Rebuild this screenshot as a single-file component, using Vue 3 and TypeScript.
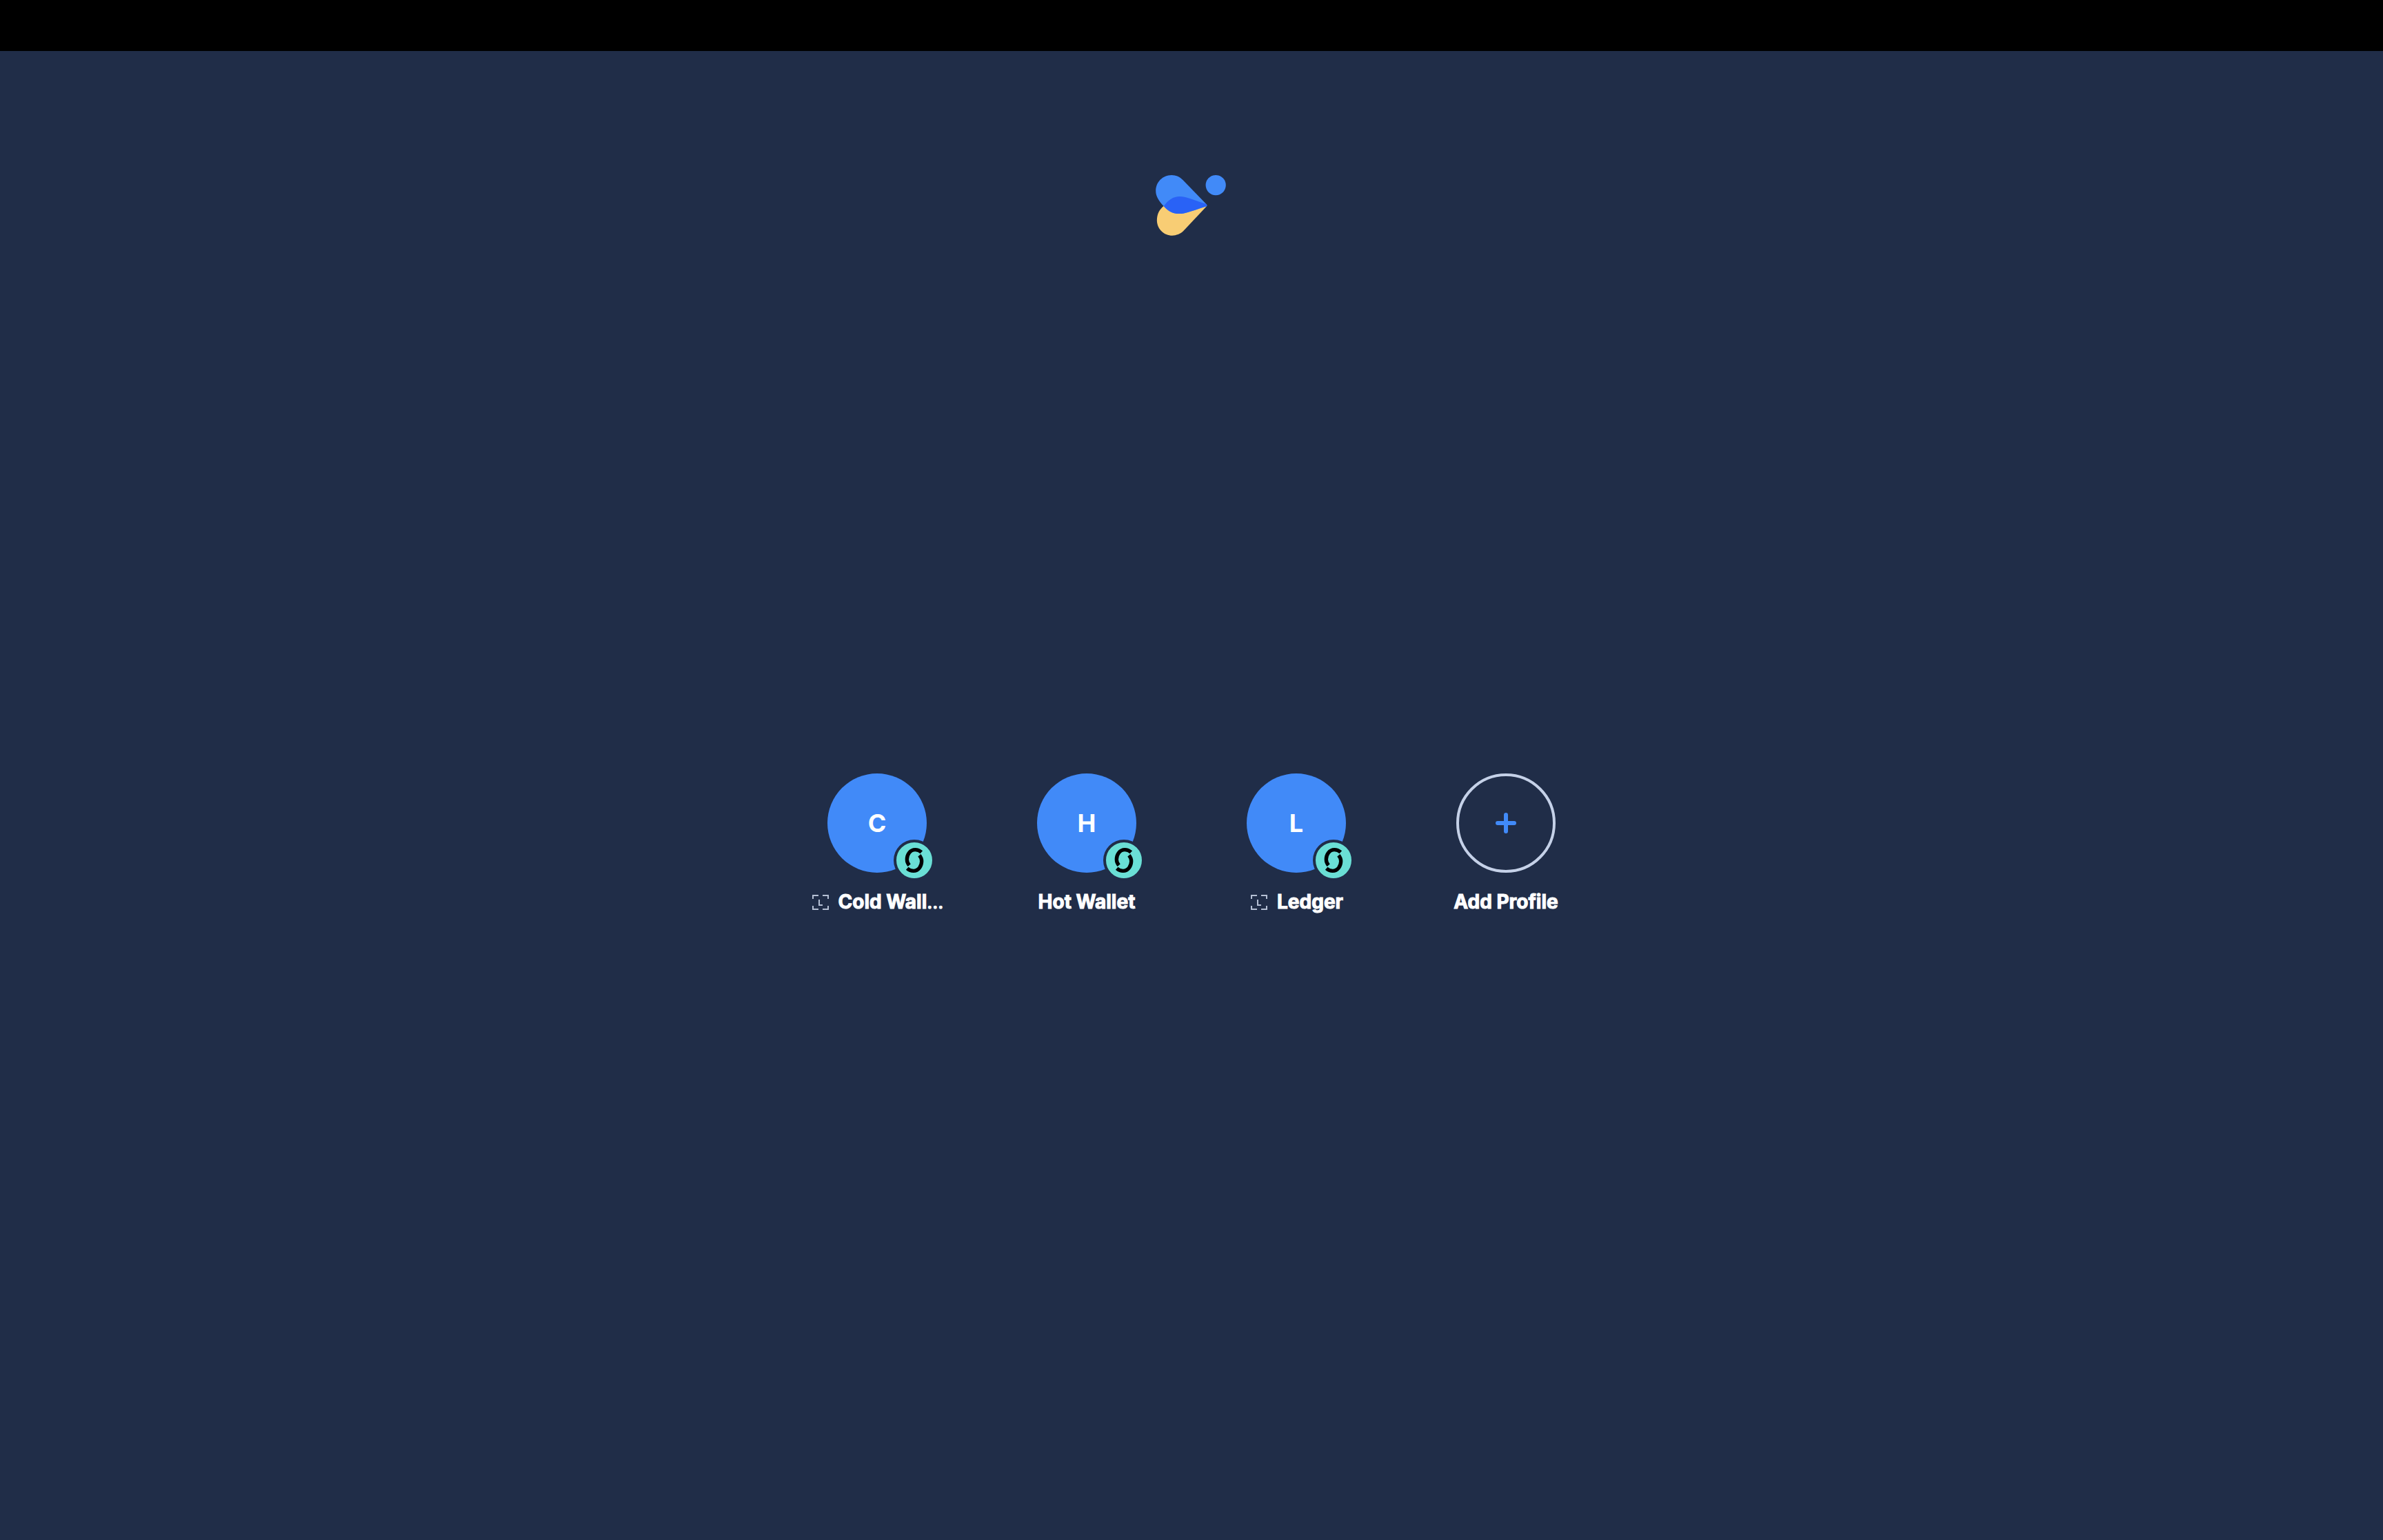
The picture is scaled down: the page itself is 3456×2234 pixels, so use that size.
<script setup lang="ts">
interface Profile {
  name: string
  hardware: boolean
}

const profiles: Profile[] = [
  { name: 'Cold Wallet', hardware: true },
  { name: 'Hot Wallet', hardware: false },
  { name: 'Ledger', hardware: true },
]

// Names longer than ten characters are cut to nine and end in dots.
const maxLength = 10

function isLong(name: string): boolean {
  return name.length > maxLength
}

function shortName(name: string): string {
  return isLong(name) ? name.slice(0, maxLength - 1) : name
}
</script>

<template>
  <div class="page">
    <div class="titlebar"></div>
    <header class="brand">
      <svg class="logo" viewBox="48 41 312 265" aria-label="Logo" role="img">
        <path
          fill="#f8cd74"
          d="M84 175C64 190 53 212 53 238C53 276 83 305 120 305C138 305 155 298 168 286L270 177Z"
        />
        <path
          fill="#418af8"
          d="M117 41C79 41 48 71 48 110C48 134 62 154 83 177C102 199 125 210 150 210C176 210 205 198 268 178C273 176 273 172 269 168L166 62C153 49 136 41 117 41Z"
        />
        <path
          fill="#2962f6"
          d="M83 177C102 149 125 134 152 134C180 134 208 148 262 165C273 168 274 176 266 178C205 198 176 210 150 210C125 210 102 199 83 177Z"
        />
        <circle cx="310" cy="85" r="44" fill="#418af8" />
      </svg>
    </header>
    <main class="profiles">
      <button v-for="profile in profiles" :key="profile.name" class="profile" type="button">
        <span class="avatar">
          {{ profile.name.charAt(0) }}
          <svg class="badge" viewBox="60 36 156 156" aria-hidden="true">
            <g fill="none" stroke="#000" stroke-width="16">
              <path d="M169 79C160 71 151 68 142 68C119 68 106 90 106 110C106 120 110 129 116 136" />
              <path d="M107 149C116 157 125 160 134 160C157 160 170 138 170 118C170 108 166 99 160 92" />
            </g>
          </svg>
        </span>
        <span class="label">
          <svg v-if="profile.hardware" class="device" viewBox="0 0 28 28" aria-hidden="true">
            <path
              fill="none"
              stroke="#b4bfd4"
              stroke-width="2"
              d="M3 10V5H11M17 5H25V10M25 20V25H17M11 25H3V20M12 11V19H17"
            />
          </svg>
          <span>{{ shortName(profile.name) }}<span v-if="isLong(profile.name)" class="dots">...</span></span>
        </span>
      </button>
      <button class="profile" type="button">
        <span class="avatar add">
          <svg class="plus" viewBox="0 0 30 30" aria-hidden="true">
            <path d="M15 3V27M3 15H27" stroke="#418af8" stroke-width="6" stroke-linecap="round" />
          </svg>
        </span>
        <span class="label">Add Profile</span>
      </button>
    </main>
  </div>
</template>

<style>
body {
  background: #202d48;
}
</style>

<style scoped>
.page {
  display: flex;
  flex-direction: column;
  min-height: 100vh;
  background: #202d48;
  color: #fff;
  font-family: Inter, 'Liberation Sans', sans-serif;
}

.titlebar {
  height: 74px;
  background: #000;
}

.brand {
  display: flex;
  justify-content: center;
  padding-top: 180px;
}

.logo {
  width: 104px;
  height: 88px;
}

.profiles {
  display: flex;
  justify-content: center;
  gap: 112px;
  margin-top: 780px;
}

.profile {
  display: flex;
  flex-direction: column;
  align-items: center;
  gap: 24px;
  width: 192px;
  padding: 0;
  border: 0;
  background: none;
  color: inherit;
  font-family: inherit;
  cursor: pointer;
}

.avatar {
  position: relative;
  display: flex;
  align-items: center;
  justify-content: center;
  box-sizing: border-box;
  width: 144px;
  height: 144px;
  border-radius: 50%;
  background: #418af8;
  font-size: 36px;
  font-weight: 700;
  line-height: 44px;
}

.badge {
  position: absolute;
  right: -12px;
  bottom: -12px;
  width: 52px;
  height: 52px;
  border: 4px solid #202d48;
  border-radius: 50%;
  background: #6adfd5;
}

.add {
  border: 4px solid #c5d1e8;
  background: none;
}

.plus {
  width: 30px;
  height: 30px;
}

.label {
  display: flex;
  align-items: center;
  gap: 12px;
  font-size: 28px;
  font-weight: 700;
  line-height: 36px;
  white-space: nowrap;
  -webkit-text-stroke: 1px currentColor;
}

.dots {
  font-weight: 400;
}

.device {
  flex: none;
  width: 28px;
  height: 28px;
}
</style>
